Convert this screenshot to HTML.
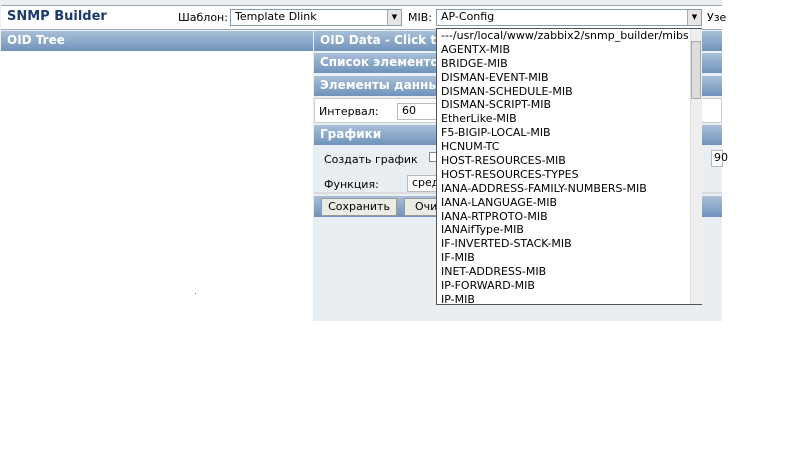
<!DOCTYPE html><html><head><meta charset="utf-8"><style>
body{margin:0;width:800px;height:450px;background:#fff;font-family:Tahoma,"DejaVu Sans","Liberation Sans",sans-serif;font-size:11px;position:relative;overflow:hidden}
.a{position:absolute}
.hdr{position:absolute;background:linear-gradient(#a9bfd8,#6f93bb);color:#fff;font-weight:bold;font-size:12px;line-height:19px;padding-left:6px;box-sizing:border-box}
.sel{position:absolute;background:#fff;border:1px solid #8a9aad;box-sizing:border-box;line-height:14px;padding-left:4px;font-size:11px}
.arr{position:absolute;right:0;top:0;width:13px;height:100%;background:#e6e6e6;border-left:1px solid #aaa;font-size:7px;text-align:center;line-height:15px}
.btn{position:absolute;background:#eceae4;border:1px solid #999;font-size:11px;line-height:16px;text-align:center;box-sizing:border-box}
.list{position:absolute;left:436px;top:28px;width:266px;height:277px;background:#fff;border:1px solid #555;box-sizing:border-box}
.list div{height:13.9px;line-height:14px;padding-left:4px;white-space:nowrap;font-size:11px}
</style></head><body>
<div class="a" style="left:0;top:0;width:722px;height:321px;background:#e9eef3"></div>
<div class="a" style="left:1px;top:5px;width:721px;height:25px;background:#fff;border-top:1px solid #9ab;border-bottom:1px solid #9ab;box-sizing:border-box"></div>
<div class="a" style="left:7px;top:9px;font-size:13px;font-weight:bold;color:#1c3a6e">SNMP Builder</div>
<div class="a" style="left:178px;top:11px">Шаблон:</div>
<div class="sel" style="left:230px;top:9px;width:172px;height:17px">Template Dlink<div class="arr">▼</div></div>
<div class="a" style="left:408px;top:11px">MIB:</div>
<div class="sel" style="left:436px;top:9px;width:266px;height:17px">AP-Config<div class="arr">▼</div></div>
<div class="a" style="left:707px;top:11px">Узе</div>
<div class="hdr" style="left:1px;top:31px;width:312px;height:20px">OID Tree</div>
<div class="a" style="left:0;top:51px;width:313px;height:270px;background:#fff"></div>
<div class="a" style="left:195px;top:293px;width:1px;height:1px;background:#666"></div>
<div class="hdr" style="left:314px;top:31px;width:408px;height:20px">OID Data - Click to</div>
<div class="hdr" style="left:314px;top:53px;width:408px;height:20px">Список элементов</div>
<div class="hdr" style="left:314px;top:76px;width:408px;height:20px">Элементы данных</div>
<div class="a" style="left:314px;top:98px;width:408px;height:25px;background:#fff;border:1px solid #ccc;box-sizing:border-box"></div>
<div class="a" style="left:319px;top:105px">Интервал:</div>
<div class="sel" style="left:397px;top:103px;width:60px;height:17px;border-color:#bbb">60</div>
<div class="hdr" style="left:314px;top:125px;width:408px;height:20px">Графики</div>
<div class="a" style="left:324px;top:153px">Создать график</div>
<div class="a" style="left:429px;top:152px;width:8px;height:8px;border:1px solid #888;background:#fff"></div>
<div class="sel" style="left:711px;top:150px;width:12px;height:17px;border-color:#bbb;padding-left:2px">90</div>
<div class="a" style="left:324px;top:178px">Функция:</div>
<div class="sel" style="left:407px;top:175px;width:40px;height:17px;border-color:#bbb">сред</div>
<div class="a" style="left:314px;top:192px;width:408px;height:2px;background:#ddd"></div>
<div class="hdr" style="left:314px;top:196px;width:408px;height:21px"></div>
<div class="btn" style="left:321px;top:198px;width:76px;height:18px">Сохранить</div>
<div class="btn" style="left:404px;top:198px;width:40px;height:18px;text-align:left;padding-left:10px">Очи</div>
<div class="list">
<div>---/usr/local/www/zabbix2/snmp_builder/mibs</div><div>AGENTX-MIB</div><div>BRIDGE-MIB</div><div>DISMAN-EVENT-MIB</div><div>DISMAN-SCHEDULE-MIB</div><div>DISMAN-SCRIPT-MIB</div><div>EtherLike-MIB</div><div>F5-BIGIP-LOCAL-MIB</div><div>HCNUM-TC</div><div>HOST-RESOURCES-MIB</div><div>HOST-RESOURCES-TYPES</div><div>IANA-ADDRESS-FAMILY-NUMBERS-MIB</div><div>IANA-LANGUAGE-MIB</div><div>IANA-RTPROTO-MIB</div><div>IANAifType-MIB</div><div>IF-INVERTED-STACK-MIB</div><div>IF-MIB</div><div>INET-ADDRESS-MIB</div><div>IP-FORWARD-MIB</div><div>IP-MIB</div>
<span class="a" style="left:253px;top:0;width:11px;height:275px;background:#eee;border-left:1px solid #ddd"></span>
<span class="a" style="left:254px;top:12px;width:8px;height:56px;background:#ddd;border:1px solid #aaa"></span>
</div>
</body></html>
